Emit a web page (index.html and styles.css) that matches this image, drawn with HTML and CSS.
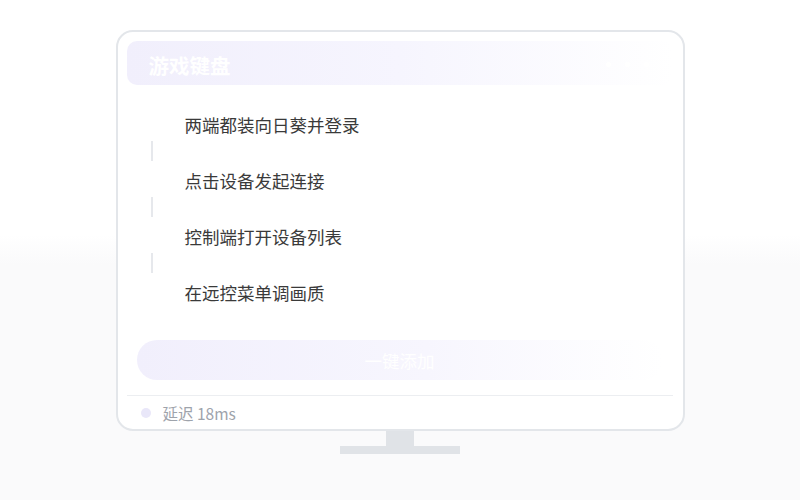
FILE: index.html
```html
<!DOCTYPE html>
<html lang="zh-CN">
<head>
<meta charset="utf-8">
<title>游戏键盘</title>
<link rel="stylesheet" href="styles.css">
</head>
<body>
<div class="stage">
  <div class="monitor">
    <div class="header">
      <span class="title">游戏键盘</span>
      <span class="dots"><i></i><i></i><i></i></span>
    </div>
    <ul class="steps">
      <li class="step">两端都装向日葵并登录</li>
      <li class="link"></li>
      <li class="step">点击设备发起连接</li>
      <li class="link"></li>
      <li class="step">控制端打开设备列表</li>
      <li class="link"></li>
      <li class="step">在远控菜单调画质</li>
    </ul>
    <div class="btn-wrap"><button class="btn">一键添加</button></div>
    <div class="footer">
      <span class="status-dot"></span>
      <span class="latency">延迟 18ms</span>
    </div>
  </div>
  <div class="neck"></div>
  <div class="base"></div>
</div>
</body>
</html>
```

FILE: styles.css
```css
* { box-sizing: border-box; }
html, body { margin: 0; padding: 0; }
body {
  width: 800px;
  height: 500px;
  overflow: hidden;
  font-family: "Noto Sans CJK SC", "Noto Sans", sans-serif;
  background: linear-gradient(to bottom, #ffffff 0, #ffffff 47%, #fafafb 53%, #fafafb 100%);
}
.stage {
  display: flex;
  flex-direction: column;
  align-items: center;
  padding-top: 30px;
}
.monitor {
  width: 569px;
  height: 401px;
  border: 2px solid #e3e6ea;
  border-radius: 17px;
  background: #fff;
  padding: 9px 10px 0 9px;
  display: flex;
  flex-direction: column;
}
.header {
  height: 45px;
  border-radius: 10px;
  background: linear-gradient(to right, #f1effc 0%, #f6f5fe 50%, #ffffff 100%);
  display: flex;
  align-items: center;
  justify-content: space-between;
  padding: 0 24px 0 22px;
}
.title {
  color: #ffffff;
  font-size: 20.5px;
  font-weight: 700;
  line-height: 1;
  padding-top: 4px;
}
.dots { display: flex; gap: 14px; padding-top: 2px; }
.dots i { width: 5px; height: 5px; border-radius: 50%; background: #ffffff; display: block; }
.steps {
  list-style: none;
  margin: 0;
  padding: 22px 0 0 0;
}
.step {
  height: 36px;
  line-height: 36px;
  font-size: 17.5px;
  color: #3a3a3a;
  padding-left: 58px;
}
.link {
  width: 2px;
  height: 20px;
  margin: -2px 0 2px 24px;
  background: #e6e8ec;
}
.btn-wrap {
  padding: 29px 10px 0 10px;
}
.btn {
  display: block;
  width: 100%;
  height: 40px;
  border: 0;
  border-radius: 20px;
  background: linear-gradient(to right, #f1effc 0%, #f7f6fe 55%, #ffffff 100%);
  color: #ffffff;
  font-family: "Noto Sans CJK SC", "Noto Sans", sans-serif;
  font-size: 17.5px;
  padding: 0;
}
.footer {
  margin-top: 15px;
  border-top: 1px solid #eceef1;
  height: 34px;
  display: flex;
  align-items: center;
  padding-left: 14px;
  gap: 12px;
}
.status-dot {
  width: 10px;
  height: 10px;
  border-radius: 50%;
  background: #e9e7f9;
}
.latency {
  font-size: 15.5px;
  color: #9ea3ab;
  padding-top: 1px;
}
.neck {
  width: 28px;
  height: 15px;
  background: #e0e3e7;
}
.base {
  width: 120px;
  height: 8px;
  background: #e0e3e7;
}
```
